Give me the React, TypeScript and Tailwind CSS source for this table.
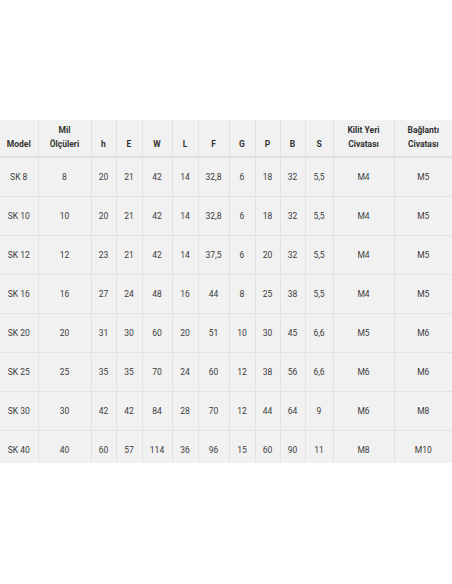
const headers = ["Model", "Mil Ölçüleri", "h", "E", "W", "L", "F", "G", "P", "B", "S", "Kilit Yeri Civatası", "Bağlantı Civatası"];

const widths = [38, 53, 25, 26, 30, 26, 31, 26, 25, 25, 28, 61, 58];

const rows = [
  ["SK 8", "8", "20", "21", "42", "14", "32,8", "6", "18", "32", "5,5", "M4", "M5"],
  ["SK 10", "10", "20", "21", "42", "14", "32,8", "6", "18", "32", "5,5", "M4", "M5"],
  ["SK 12", "12", "23", "21", "42", "14", "37,5", "6", "20", "32", "5,5", "M4", "M5"],
  ["SK 16", "16", "27", "24", "48", "16", "44", "8", "25", "38", "5,5", "M4", "M5"],
  ["SK 20", "20", "31", "30", "60", "20", "51", "10", "30", "45", "6,6", "M5", "M6"],
  ["SK 25", "25", "35", "35", "70", "24", "60", "12", "38", "56", "6,6", "M6", "M6"],
  ["SK 30", "30", "42", "42", "84", "28", "70", "12", "44", "64", "9", "M6", "M8"],
  ["SK 40", "40", "60", "57", "114", "36", "96", "15", "60", "90", "11", "M8", "M10"],
];

// two-line headers split at the first word, except "Kilit Yeri"
const splitHeader = (h: string) => {
  if (h === "Kilit Yeri Civatası") return ["Kilit Yeri", "Civatası"];
  const parts = h.split(" ");
  if (parts.length === 1) return [h];
  return [parts[0], parts.slice(1).join(" ")];
};

export default function App() {
  return (
    <div className="w-[452px] h-[584px] bg-white pt-[120px]" style={{ fontFamily: "Roboto, 'Liberation Sans', sans-serif" }}>
      <div className="h-[343px] overflow-hidden">
        <table className="w-[452px] table-fixed border-collapse bg-[#f1f1f1] text-[#3c3c3c]">
          <colgroup>
            {widths.map((w, i) => (
              <col key={i} style={{ width: w }} />
            ))}
          </colgroup>
          <thead>
            <tr className="h-[37px] border-b-2 border-[#e0e0e0]">
              {headers.map((h, i) => {
                const lines = splitHeader(h);
                return (
                  <th
                    key={i}
                    className="border-x border-[#e3e3e3] first:border-l-0 last:border-r-0 align-bottom px-0 pb-[5px] pt-[2px] text-center text-[8.5px] font-bold leading-[14px] text-[#333]"
                  >
                    {lines.length === 2 ? (
                      <>
                        {lines[0]}
                        <br />
                        {lines[1]}
                      </>
                    ) : (
                      h
                    )}
                  </th>
                );
              })}
            </tr>
          </thead>
          <tbody>
            {rows.map((r, ri) => (
              <tr key={ri} className="h-[39px] border-b border-[#e3e3e3]">
                {r.map((c, ci) => (
                  <td
                    key={ci}
                    className="border-x border-[#e3e3e3] first:border-l-0 last:border-r-0 p-0 text-center align-middle text-[8.5px] leading-[12px]"
                  >
                    {c}
                  </td>
                ))}
              </tr>
            ))}
          </tbody>
        </table>
      </div>
    </div>
  );
}
